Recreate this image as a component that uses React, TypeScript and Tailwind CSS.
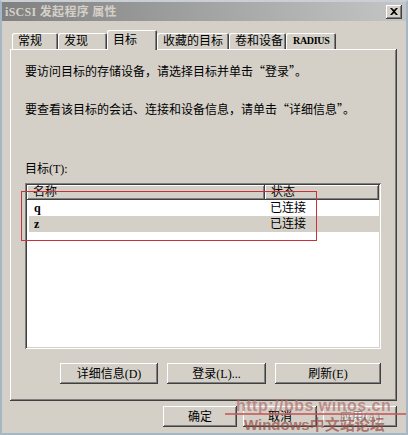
import React from 'react';

// classic raised / sunken bevels
const raised =
  'shadow-[inset_-1px_-1px_#404040,inset_1px_1px_#ffffff,inset_-2px_-2px_#808080,inset_2px_2px_#d4d0c8]';
const sunken =
  'shadow-[inset_1px_1px_#808080,inset_-1px_-1px_#ffffff,inset_2px_2px_#404040,inset_-2px_-2px_#d4d0c8]';

const serif = "font-['Liberation_Serif','Noto_Sans_CJK_SC',serif]";
const cjk = "font-['Noto_Sans_CJK_SC','Liberation_Sans',sans-serif]";

interface Tab {
  label: string;
  width: string;
  active?: boolean;
  small?: boolean;
}

const tabs: Tab[] = [
  { label: '常规', width: 'w-[46px]' },
  { label: '发现', width: 'w-[49px]' },
  { label: '目标', width: 'w-[50px]', active: true },
  { label: '收藏的目标', width: 'w-[72px]' },
  { label: '卷和设备', width: 'w-[57px]' },
  { label: 'RADIUS', width: 'w-[50px]', small: true },
];

const targets = [
  { name: 'q', status: '已连接', selected: false },
  { name: 'z', status: '已连接', selected: true },
];

const Button: React.FC<{ label: string; width: string; disabled?: boolean }> = ({ label, width, disabled }) => (
  <div
    className={`${width} h-[21px] bg-[#d4d0c8] ${raised} flex items-center justify-center text-[12px] leading-none ${
      disabled ? 'text-[#8c8c8c] [text-shadow:1px_1px_#ffffff]' : 'text-black'
    }`}
  >
    {label}
  </div>
);

const App: React.FC = () => {
  return (
    <div
      className={`relative w-[408px] h-[435px] overflow-hidden bg-[#d4d0c8] border-2 border-t-2 border-[#a7b6c4] border-t-[#c9cfd4] flex flex-col ${serif}`}
    >
      {/* title bar */}
      <div className="h-[19px] flex items-center justify-between pl-[3px] pr-[4px] bg-linear-to-r from-[#808080] to-[#c4c6c6]">
        <span className="text-[12px] font-bold text-[#d4d0c8] leading-none tracking-[0.3px]">iSCSI 发起程序 属性</span>
        <div className={`w-[16px] h-[14px] bg-[#d4d0c8] ${raised} flex items-center justify-center`}>
          <svg width="8" height="7" viewBox="0 0 8 7">
            <path d="M0 0h2l2 2 2-2h2L5 3.5 8 7H6L4 5 2 7H0l3-3.5z" fill="#000" />
          </svg>
        </div>
      </div>

      <div className="flex flex-col px-[8px] pt-[8px]">
        {/* tabs */}
        <div className="flex items-end h-[20px] pl-[2px] relative z-10">
          {tabs.map((t) => (
            <div
              key={t.label}
              className={`${t.width} ${
                t.active
                  ? 'h-[20px] mb-[-1px] pt-[3px] shadow-[inset_1px_1px_#ffffff,inset_-1px_0_#404040,inset_-2px_0_#808080]'
                  : 'h-[16px] pt-[1px] shadow-[inset_1px_1px_#ffffff,inset_-1px_0_#404040,inset_-2px_0_#808080]'
              } bg-[#d4d0c8] rounded-t-[2px] ${
                t.small ? 'pl-[7px] text-[10px] tracking-[-0.3px] font-bold' : 'pl-[6px] text-[12px]'
              } leading-[14px] text-black whitespace-nowrap`}
            >
              {t.label}
            </div>
          ))}
        </div>

        {/* panel */}
        <div className={`h-[352px] w-[387px] bg-[#d4d0c8] ${raised} flex flex-col pl-[15px] pr-[16px] pt-[14px]`}>
          <div className={`${cjk} text-[12px] leading-[16px] text-black`}>
            要访问目标的存储设备，请选择目标并单击“登录”。
          </div>
          <div className={`${cjk} text-[12px] leading-[16px] text-black mt-[22px]`}>
            要查看该目标的会话、连接和设备信息，请单击“详细信息”。
          </div>
          <div className="text-[12px] leading-[16px] text-black mt-[44px]">目标(T):</div>

          {/* list */}
          <div className={`mt-[6px] w-[356px] h-[166px] bg-white ${sunken} p-[2px] flex flex-col`}>
            <div className="flex h-[15px] text-[12px] leading-[15px] text-black">
              <div className={`w-[238px] bg-[#d4d0c8] ${raised} pl-[6px]`}>名称</div>
              <div className={`flex-1 bg-[#d4d0c8] ${raised} pl-[6px]`}>状态</div>
            </div>
            {targets.map((r) => (
              <div
                key={r.name}
                className={`ml-[2px] flex h-[16px] items-center text-[12px] leading-none text-black ${
                  r.selected ? 'bg-[#d4d0c8]' : 'bg-white'
                }`}
              >
                <div className="w-[236px] pl-[5px] font-bold">{r.name}</div>
                <div className="pl-[5px]">{r.status}</div>
              </div>
            ))}
          </div>

          <div className="mt-[14px] flex justify-end gap-[9px]">
            <Button label="详细信息(D)" width="w-[98px]" />
            <Button label="登录(L)..." width="w-[99px]" />
            <Button label="刷新(E)" width="w-[106px]" />
          </div>
        </div>

        {/* dialog buttons */}
        <div className="mt-[5px] flex justify-end gap-[6px] pr-[1px]">
          <Button label="确定" width="w-[74px]" />
          <Button label="取消" width="w-[74px]" />
          <Button label="应用(A)" width="w-[74px]" disabled />
        </div>
      </div>

      {/* red annotation box */}
      <div className="absolute left-[19px] top-[189px] w-[296px] h-[50px] border border-[#c8303c] pointer-events-none" />

      {/* watermark */}
      <div className="absolute left-[234px] top-[396px] text-[16px] leading-[16px] font-bold text-[#b36a6a]/70 font-['Liberation_Sans',sans-serif] tracking-[0.5px] pointer-events-none">
        http://bbs.winos.cn
      </div>
      <div className="absolute left-[223px] top-[411px] w-[182px] h-[2px] bg-[#c25a5a]/80 pointer-events-none" />
      <div className="absolute left-[242px] top-[414px] text-[15px] leading-[17px] font-bold text-[#9a4b43]/70 font-['Liberation_Sans','Noto_Sans_CJK_SC',sans-serif] pointer-events-none">
        Windows中文站论坛
      </div>
    </div>
  );
};

export default App;
